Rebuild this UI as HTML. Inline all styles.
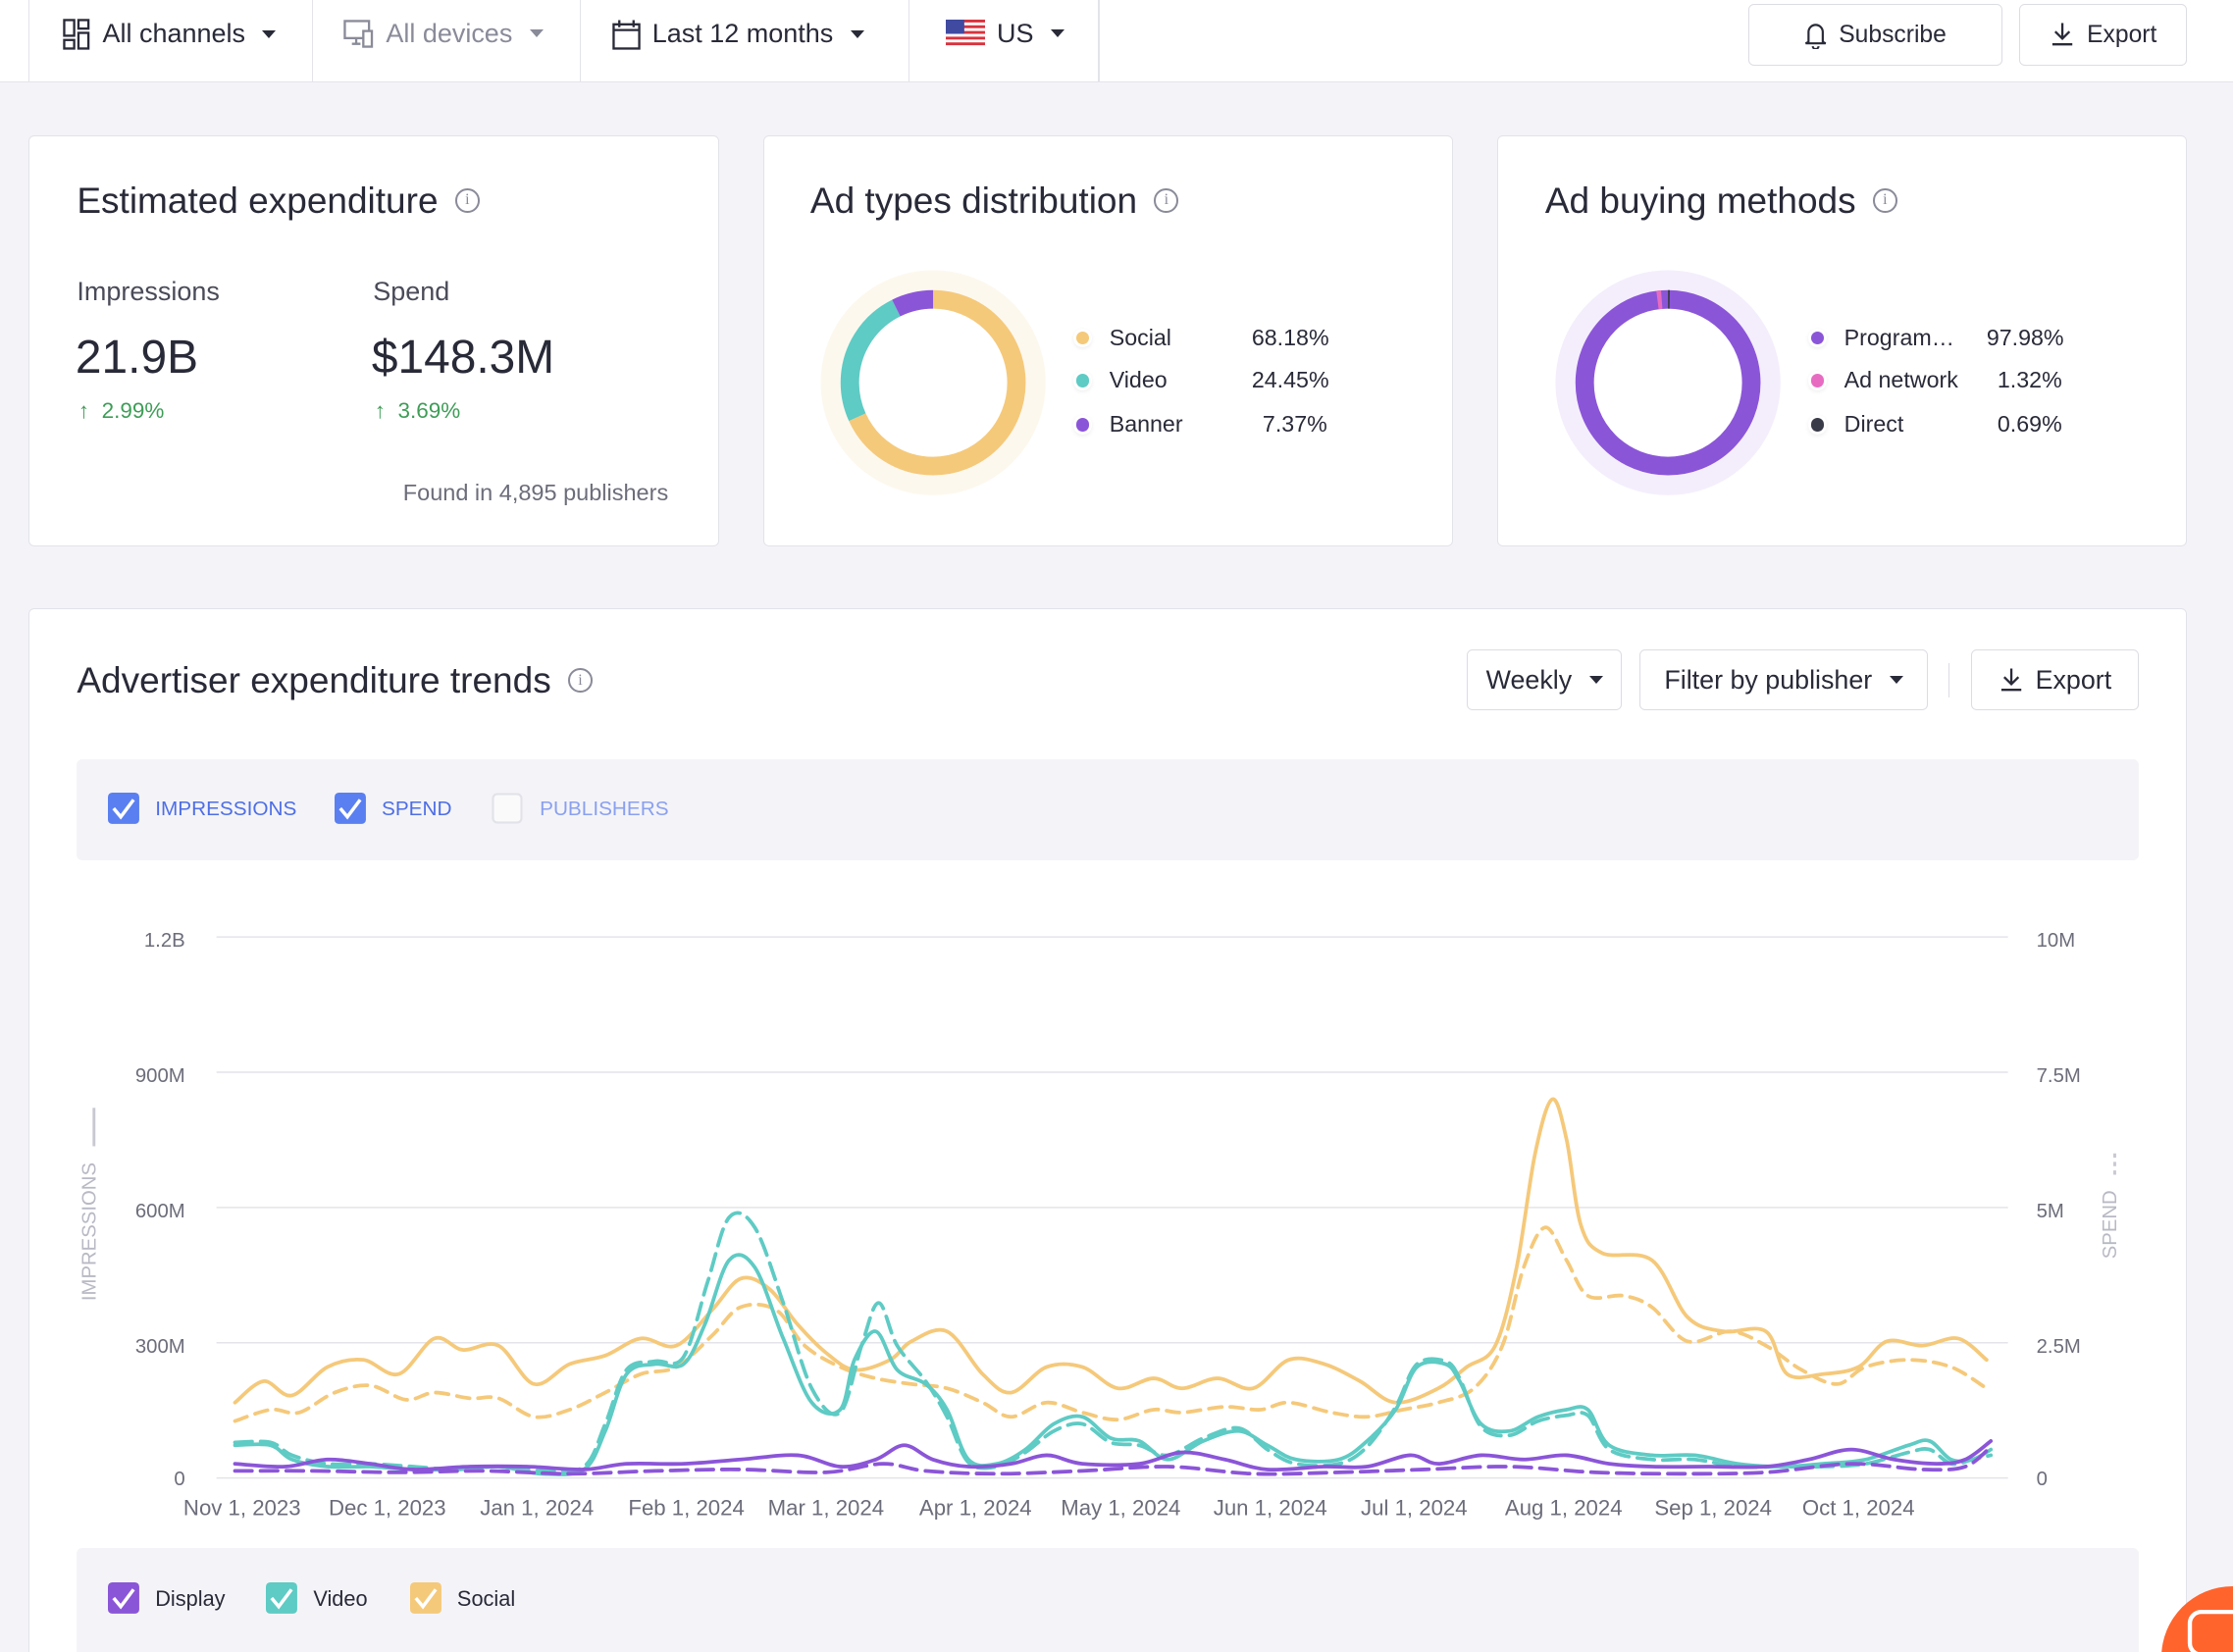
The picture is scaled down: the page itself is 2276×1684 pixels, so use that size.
<!DOCTYPE html>
<html><head><meta charset="utf-8">
<style>
html,body{margin:0;padding:0;background:#f4f4f8;overflow:hidden;width:2276px;height:1684px}
#w{zoom:1.4515;width:1568px;height:1160px;position:relative;font-family:"Liberation Sans",sans-serif;color:#292a38;overflow:hidden}
.a{position:absolute}
.top{left:0;top:0;width:1568px;height:57px;background:#fff;border-bottom:1px solid #e3e3ea}
.sep{top:0;width:1px;height:57px;background:#e3e3ea}
.ti{top:13px;font-size:18.6px;display:flex;align-items:center;gap:8px}
.car{width:0;height:0;border-left:5px solid transparent;border-right:5px solid transparent;border-top:6px solid #292a38;margin-left:4px}
.btn{background:#fff;border:1px solid #dcdce4;border-radius:4px;font-size:17px;display:flex;align-items:center;justify-content:center;gap:8px;box-sizing:border-box}
.card{background:#fff;border:1px solid #e2e2ea;border-radius:4px;box-sizing:border-box}
.h{font-size:25.5px;display:flex;align-items:center;gap:12px}
.inf{width:17px;height:17px;border:1.5px solid #8a8b99;border-radius:50%;font-size:11px;color:#8a8b99;display:flex;align-items:center;justify-content:center;font-family:"Liberation Serif",serif;box-sizing:border-box}
.lg{font-size:16px;display:flex;align-items:center}
.dot{width:9px;height:9px;border-radius:50%;margin-right:14px;box-shadow:0 0 0 2px #fff,0 1px 3px 2px #eee}
</style></head><body><div id="w">
<div class="a top"></div>
<div class="a sep" style="left:20px"></div><div class="a sep" style="left:219px"></div><div class="a sep" style="left:407px"></div><div class="a sep" style="left:638px"></div><div class="a sep" style="left:771px"></div>
<div class="a ti" style="left:44px"><svg width="20" height="22" viewBox="0 0 20 22" fill="none" stroke="#292a38" stroke-width="1.6"><rect x="1" y="1" width="7" height="11"/><rect x="11" y="1" width="7" height="6"/><rect x="1" y="15" width="7" height="6"/><rect x="11" y="10" width="7" height="11"/></svg>All channels<span class="car"></span></div>
<div class="a ti" style="left:241px;color:#8a8b99"><svg width="22" height="20" viewBox="0 0 22 20" fill="none" stroke="#8a8b99" stroke-width="1.6"><rect x="1" y="1" width="17" height="12"/><path d="M6 17h6M9 13v4"/><rect x="14" y="8" width="6" height="11" fill="#fff"/></svg>All devices<span class="car" style="border-top-color:#8a8b99"></span></div>
<div class="a ti" style="left:430px"><svg width="20" height="22" viewBox="0 0 20 22" fill="none" stroke="#292a38" stroke-width="1.6"><rect x="1" y="4" width="18" height="17"/><path d="M1 8h18M5 1v5M15 1v5"/></svg>Last 12 months<span class="car"></span></div>
<div class="a ti" style="left:664px"><svg width="28" height="20" viewBox="0 0 28 20"><rect width="28" height="20" fill="#fff"/><g fill="#d8333e"><rect y="0" width="28" height="2"/><rect y="4" width="28" height="2"/><rect y="8" width="28" height="2"/><rect y="12" width="28" height="2"/><rect y="16" width="28" height="2"/></g><rect width="13" height="10" fill="#3f4aa0"/></svg>US<span class="car"></span></div>
<div class="a btn" style="left:1228px;top:3px;width:178px;height:43px"><svg width="16" height="20" viewBox="0 0 16 20" fill="none" stroke="#292a38" stroke-width="1.5"><path d="M3 15V8a5 5 0 0 1 10 0v7l2 1H1z"/><path d="M6 18a2 2 0 0 0 4 0"/></svg>Subscribe</div>
<div class="a btn" style="left:1418px;top:3px;width:118px;height:43px"><svg width="18" height="18" viewBox="0 0 18 18" fill="none" stroke="#292a38" stroke-width="1.6"><path d="M9 1v11M4 7l5 5 5-5M2 16h14"/></svg>Export</div>

<div class="a card" style="left:20px;top:95px;width:485px;height:289px"></div>
<div class="a h" style="left:54px;top:126px">Estimated expenditure<span class="inf">i</span></div>
<div class="a" style="left:54px;top:194px;font-size:18.6px;color:#4a4b58">Impressions</div>
<div class="a" style="left:262px;top:194px;font-size:18.6px;color:#4a4b58">Spend</div>
<div class="a" style="left:53px;top:232px;font-size:33px">21.9B</div>
<div class="a" style="left:261px;top:232px;font-size:33px">$148.3M</div>
<div class="a" style="left:55px;top:280px;font-size:15.5px;color:#3e9d57">↑&nbsp; 2.99%</div>
<div class="a" style="left:263px;top:280px;font-size:15.5px;color:#3e9d57">↑&nbsp; 3.69%</div>
<div class="a" style="left:283px;top:337px;font-size:16.2px;color:#6c6d7a">Found in 4,895 publishers</div>

<div class="a card" style="left:536px;top:95px;width:484px;height:289px"></div>
<div class="a h" style="left:569px;top:126px">Ad types distribution<span class="inf">i</span></div>
<svg class="a" style="left:575px;top:189px" width="160" height="160" viewBox="-80 -80 160 160">
<circle r="72" fill="none" stroke="#fdf8ee" stroke-width="14"/>
<g transform="rotate(-90)">
<circle r="58.5" fill="none" stroke="#f5c97a" stroke-width="13" stroke-dasharray="250.6 400"/>
<circle r="58.5" fill="none" stroke="#5ecbc4" stroke-width="13" stroke-dasharray="0 250.6 89.9 400"/>
<circle r="58.5" fill="none" stroke="#8b55d8" stroke-width="13" stroke-dasharray="0 340.5 27.1 400"/>
</g></svg>
<div class="a lg" style="left:756px;top:228px"><span class="dot" style="background:#f5c97a"></span><span style="width:100px">Social</span><span style="width:53px;text-align:right">68.18%</span></div>
<div class="a lg" style="left:756px;top:258px"><span class="dot" style="background:#5ecbc4"></span><span style="width:100px">Video</span><span style="width:53px;text-align:right">24.45%</span></div>
<div class="a lg" style="left:756px;top:289px"><span class="dot" style="background:#8b55d8"></span><span style="width:100px">Banner</span><span style="width:53px;text-align:right">7.37%</span></div>

<div class="a card" style="left:1051px;top:95px;width:485px;height:289px"></div>
<div class="a h" style="left:1085px;top:126px">Ad buying methods<span class="inf">i</span></div>
<svg class="a" style="left:1091px;top:189px" width="160" height="160" viewBox="-80 -80 160 160">
<circle r="72" fill="none" stroke="#f4eefc" stroke-width="14"/>
<g transform="rotate(-90)">
<circle r="58.5" fill="none" stroke="#8b55d8" stroke-width="13"/>
<circle r="58.5" fill="none" stroke="#e86bc2" stroke-width="13" stroke-dasharray="0 360 3 400"/>
<circle r="58.5" fill="none" stroke="#3a3b48" stroke-width="13" stroke-dasharray="1.2 400"/>
</g></svg>
<div class="a lg" style="left:1272px;top:228px"><span class="dot" style="background:#8b55d8"></span><span style="width:100px">Program…</span><span style="width:53px;text-align:right">97.98%</span></div>
<div class="a lg" style="left:1272px;top:258px"><span class="dot" style="background:#e86bc2"></span><span style="width:100px">Ad network</span><span style="width:53px;text-align:right">1.32%</span></div>
<div class="a lg" style="left:1272px;top:289px"><span class="dot" style="background:#3a3b48"></span><span style="width:100px">Direct</span><span style="width:53px;text-align:right">0.69%</span></div>

<div class="a card" style="left:20px;top:427px;width:1516px;height:733px;border-bottom:none;border-radius:4px 4px 0 0"></div>
<div class="a h" style="left:54px;top:463px">Advertiser expenditure trends<span class="inf">i</span></div>
<div class="a btn" style="left:1030px;top:456px;width:109px;height:43px;font-size:18.5px">Weekly<span class="car"></span></div>
<div class="a btn" style="left:1151px;top:456px;width:203px;height:43px;font-size:18.5px">Filter by publisher<span class="car"></span></div>
<div class="a" style="left:1368px;top:466px;width:1px;height:24px;background:#dcdce4"></div>
<div class="a btn" style="left:1384px;top:456px;width:118px;height:43px;font-size:18.5px"><svg width="18" height="18" viewBox="0 0 18 18" fill="none" stroke="#292a38" stroke-width="1.6"><path d="M9 1v11M4 7l5 5 5-5M2 16h14"/></svg>Export</div>

<div class="a" style="left:54px;top:533px;width:1448px;height:71px;background:#f4f4f8;border-radius:4px"></div>
<svg class="a" style="left:76px;top:557px" width="22" height="22"><rect width="22" height="22" rx="3" fill="#5a7ff0"/><path d="M4 11l5 6 9-12" fill="none" stroke="#fff" stroke-width="2.4"/></svg>
<div class="a" style="left:109px;top:560px;font-size:14.3px;color:#4e6ee6">IMPRESSIONS</div>
<svg class="a" style="left:235px;top:557px" width="22" height="22"><rect width="22" height="22" rx="3" fill="#5a7ff0"/><path d="M4 11l5 6 9-12" fill="none" stroke="#fff" stroke-width="2.4"/></svg>
<div class="a" style="left:268px;top:560px;font-size:14.3px;color:#4e6ee6">SPEND</div>
<svg class="a" style="left:345px;top:557px" width="22" height="22"><rect x="1" y="1" width="20" height="20" rx="3" fill="#fafafb" stroke="#e2e2ea" stroke-width="1.5"/></svg>
<div class="a" style="left:379px;top:560px;font-size:14.3px;color:#8aa0f0">PUBLISHERS</div>

<svg class="a" style="left:0;top:0" width="1568" height="1160" id="ch">
<g stroke="#e4e4ea" stroke-width="1"><line x1="152" x2="1410" y1="658" y2="658"/><line x1="152" x2="1410" y1="753" y2="753"/><line x1="152" x2="1410" y1="848" y2="848"/><line x1="152" x2="1410" y1="943" y2="943"/><line x1="152" x2="1410" y1="1038" y2="1038"/></g>
<g font-family="Liberation Sans" font-size="14" fill="#6c6d7a" text-anchor="end"><text x="130" y="665">1.2B</text><text x="130" y="760">900M</text><text x="130" y="855">600M</text><text x="130" y="950">300M</text><text x="130" y="1043">0</text></g>
<g font-family="Liberation Sans" font-size="14" fill="#6c6d7a"><text x="1430" y="665">10M</text><text x="1430" y="760">7.5M</text><text x="1430" y="855">5M</text><text x="1430" y="950">2.5M</text><text x="1430" y="1043">0</text></g>
<g font-family="Liberation Sans" font-size="15.3" fill="#6c6d7a" text-anchor="middle"><text x="170" y="1064">Nov 1, 2023</text><text x="272" y="1064">Dec 1, 2023</text><text x="377" y="1064">Jan 1, 2024</text><text x="482" y="1064">Feb 1, 2024</text><text x="580" y="1064">Mar 1, 2024</text><text x="685" y="1064">Apr 1, 2024</text><text x="787" y="1064">May 1, 2024</text><text x="892" y="1064">Jun 1, 2024</text><text x="993" y="1064">Jul 1, 2024</text><text x="1098" y="1064">Aug 1, 2024</text><text x="1203" y="1064">Sep 1, 2024</text><text x="1305" y="1064">Oct 1, 2024</text></g>
<text transform="translate(67,865) rotate(-90)" font-family="Liberation Sans" font-size="14" fill="#b8b9c4" text-anchor="middle">IMPRESSIONS</text>
<line x1="66" x2="66" y1="778" y2="805" stroke="#c8c9d2" stroke-width="2"/>
<text transform="translate(1486,860) rotate(-90)" font-family="Liberation Sans" font-size="14" fill="#b8b9c4" text-anchor="middle">SPEND</text>
<line x1="1485" x2="1485" y1="810" y2="826" stroke="#c8c9d2" stroke-width="2" stroke-dasharray="3 3"/>
</svg>

<div class="a" style="left:54px;top:1087px;width:1448px;height:73px;background:#f4f4f8;border-radius:4px 4px 0 0"></div>
<svg class="a" style="left:76px;top:1111px" width="22" height="22"><rect width="22" height="22" rx="3" fill="#8b55d8"/><path d="M4 11l5 6 9-12" fill="none" stroke="#fff" stroke-width="2.4"/></svg>
<div class="a" style="left:109px;top:1114px;font-size:15px">Display</div>
<svg class="a" style="left:187px;top:1111px" width="22" height="22"><rect width="22" height="22" rx="3" fill="#5ecbc4"/><path d="M4 11l5 6 9-12" fill="none" stroke="#fff" stroke-width="2.4"/></svg>
<div class="a" style="left:220px;top:1114px;font-size:15px">Video</div>
<svg class="a" style="left:288px;top:1111px" width="22" height="22"><rect width="22" height="22" rx="3" fill="#f5c97a"/><path d="M4 11l5 6 9-12" fill="none" stroke="#fff" stroke-width="2.4"/></svg>
<div class="a" style="left:321px;top:1114px;font-size:15px">Social</div>
<svg class="a" style="left:1518px;top:1114px" width="50" height="46"><circle cx="50" cy="50" r="50" fill="#ff642d"/><rect x="20" y="18" width="40" height="30" rx="8" fill="none" stroke="#fff" stroke-width="3"/></svg>
</div>
<script>
function P(s){var p=s.trim().split(/\s+/).map(function(t){return t.split(',').map(Number)});var d='M'+p[0][0]+','+p[0][1];
for(var i=0;i<p.length-1;i++){var a=p[i-1]||p[i],b=p[i],c=p[i+1],e=p[i+2]||c;
d+=' C'+(b[0]+(c[0]-a[0])/6)+','+(b[1]+(c[1]-a[1])/6)+' '+(c[0]-(e[0]-b[0])/6)+','+(c[1]-(e[1]-b[1])/6)+' '+c[0]+','+c[1];}return d;}
var L=[
["#f5c97a","","165,985 185,970 205,980 230,960 255,955 280,965 305,940 325,948 350,945 375,972 400,958 425,952 450,940 475,945 500,920 520,898 540,905 560,930 580,950 600,962 625,955 640,942 665,935 690,965 710,978 735,960 760,960 785,975 810,968 830,975 855,968 880,975 905,955 930,958 955,970 980,985 1010,975 1030,960 1050,945 1065,890 1078,810 1090,772 1100,800 1110,860 1125,880 1160,885 1185,925 1210,935 1240,935 1255,965 1280,965 1305,960 1325,942 1350,945 1375,940 1395,955"],
["#f5c97a","9 6","165,998 190,990 210,992 235,978 260,973 285,983 305,978 330,982 350,982 375,995 400,990 425,978 450,965 475,960 500,938 520,918 545,920 565,945 590,960 615,968 640,972 665,975 690,985 710,995 735,985 760,992 785,997 810,990 830,992 860,988 885,990 905,985 935,992 960,995 985,990 1010,985 1035,975 1055,945 1070,890 1085,862 1100,885 1115,910 1140,910 1160,918 1185,942 1215,935 1240,945 1265,962 1290,972 1310,960 1340,955 1370,960 1395,975"],
["#5ecbc4","","165,1015 190,1015 205,1025 230,1030 260,1030 290,1032 320,1032 350,1030 380,1035 410,1032 425,1005 440,965 460,958 480,958 495,930 512,885 530,890 550,940 570,985 590,990 600,955 615,935 630,962 650,972 665,990 680,1025 700,1028 720,1018 740,1000 760,995 780,1010 800,1012 820,1025 845,1012 870,1005 890,1015 910,1025 940,1025 960,1012 980,990 995,960 1015,958 1025,970 1040,1000 1060,1005 1080,995 1100,990 1115,990 1130,1015 1160,1022 1190,1022 1220,1028 1250,1030 1280,1028 1310,1025 1340,1015 1355,1012 1370,1025 1385,1025 1398,1018"],
["#5ecbc4","12 6","165,1013 190,1013 205,1022 230,1028 260,1028 290,1030 320,1032 350,1030 380,1033 410,1030 425,1000 440,962 460,956 480,953 497,900 512,855 530,862 550,915 570,975 590,992 605,945 617,915 630,945 650,970 665,995 680,1027 700,1030 720,1020 740,1005 760,1000 780,1013 800,1015 820,1022 845,1010 870,1003 890,1018 910,1028 940,1028 960,1016 980,988 995,958 1015,956 1025,968 1040,1002 1060,1008 1080,998 1100,994 1115,994 1130,1018 1160,1025 1190,1025 1220,1030 1250,1030 1280,1030 1310,1028 1340,1020 1355,1018 1370,1028 1385,1025 1398,1022"],
["#8b55d8","","165,1028 200,1030 230,1025 260,1028 290,1032 330,1030 370,1030 410,1032 440,1028 480,1028 520,1025 560,1022 590,1030 615,1025 635,1015 655,1025 680,1030 710,1028 735,1022 760,1028 800,1028 830,1020 860,1025 890,1032 930,1030 960,1030 990,1022 1010,1028 1040,1022 1070,1025 1100,1022 1130,1028 1160,1030 1200,1030 1240,1030 1270,1025 1300,1018 1330,1025 1360,1028 1380,1025 1398,1012"],
["#8b55d8","12 6","165,1033 220,1033 280,1034 340,1033 400,1035 460,1033 520,1032 580,1034 620,1028 650,1033 700,1035 760,1033 820,1030 880,1035 940,1034 1000,1032 1060,1030 1120,1034 1180,1035 1240,1034 1300,1028 1350,1032 1380,1030 1398,1016"]];
var s='';L.forEach(function(l){s+='<path d="'+P(l[2])+'" fill="none" stroke="'+l[0]+'" stroke-width="2.6" stroke-linecap="round" '+(l[1]?'stroke-dasharray="'+l[1]+'"':'')+'/>';});
document.getElementById('ch').insertAdjacentHTML('beforeend',s);
</script>
</body></html>
